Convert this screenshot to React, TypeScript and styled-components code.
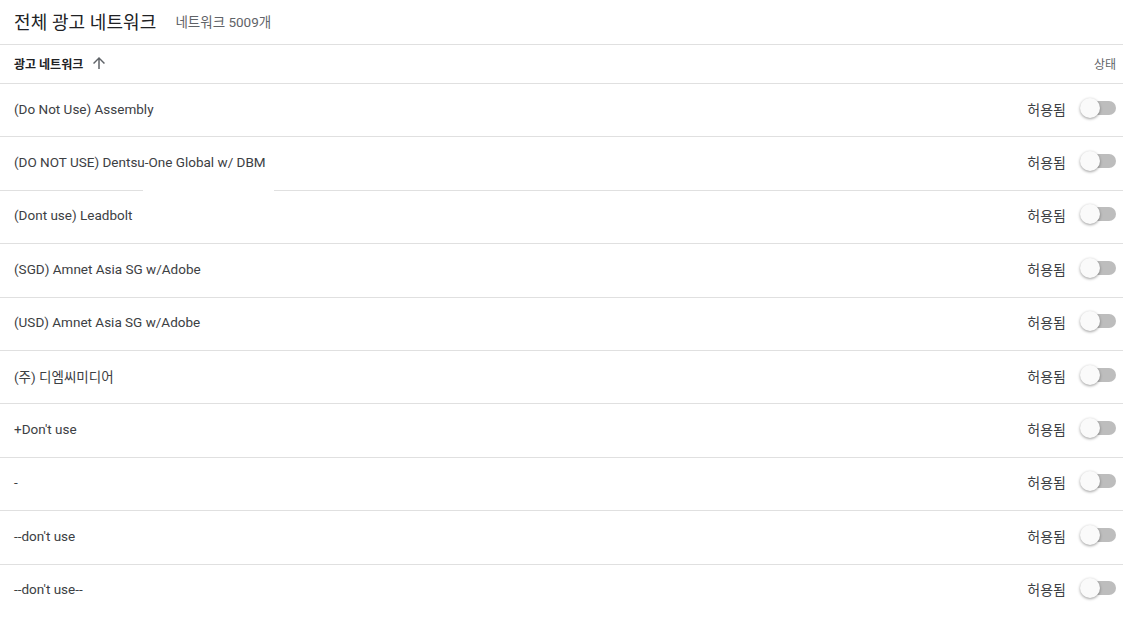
import React from "react";
import styled, { createGlobalStyle } from "styled-components";

const Global = createGlobalStyle`
  html, body { margin: 0; padding: 0; background: #fff; }
  body { font-family: Roboto, "Noto Sans CJK KR", "Noto Sans", sans-serif; color: #3c4043; }
  * { box-sizing: border-box; }
`;

const Page = styled.div`
  width: 1123px;
  position: relative;
`;

const TitleBar = styled.div`
  height: 45px;
  display: flex;
  align-items: center;
  padding: 0 0 2px 14px;
  gap: 19px;
  border-bottom: 1px solid #e0e0e0;
`;

const Title = styled.h1`
  margin: 0;
  font-size: 18px;
  font-weight: 400;
  color: #202124;
  letter-spacing: 0.1px;
`;

const Count = styled.span`
  font-size: 13.5px;
  color: #5f6368;
`;

const HeaderRow = styled.div`
  height: 39px;
  display: flex;
  align-items: center;
  justify-content: space-between;
  padding: 0 7px 0 14px;
  border-bottom: 1px solid #e0e0e0;
`;

const HeaderCell = styled.div<{ $bold?: boolean }>`
  display: flex;
  align-items: center;
  gap: 7px;
  font-size: 12px;
  font-weight: ${(p) => (p.$bold ? 700 : 400)};
  color: ${(p) => (p.$bold ? "#202124" : "#5f6368")};
  margin-top: -2px;
`;

const Row = styled.div`
  height: 53.4px;
  display: flex;
  align-items: center;
  justify-content: space-between;
  padding: 0 7px 3px 14px;
  border-bottom: 1px solid #e0e0e0;
  font-size: 13.5px;
`;

const Name = styled.span`
  color: #3c4043;
`;

const Status = styled.div`
  display: flex;
  align-items: center;
  gap: 14px;
  font-size: 14px;
  color: #3c4043;
`;

const Toggle = styled.div`
  position: relative;
  width: 36px;
  height: 20px;
  margin-top: -2px;
  display: flex;
  align-items: center;
`;

const Track = styled.div`
  width: 34px;
  height: 14px;
  margin-left: 2px;
  border-radius: 7px;
  background: #bdbdbd;
`;

const Thumb = styled.div`
  position: absolute;
  left: 0;
  top: 0;
  width: 20px;
  height: 20px;
  border-radius: 50%;
  background: #fafafa;
  box-shadow: 0 1px 3px rgba(0, 0, 0, 0.4);
`;

const Gap = styled.div`
  position: absolute;
  left: 143px;
  top: 187px;
  width: 131px;
  height: 5px;
  background: #fff;
`;

const rows = [
  "(Do Not Use) Assembly",
  "(DO NOT USE) Dentsu-One Global w/ DBM",
  "(Dont use) Leadbolt",
  "(SGD) Amnet Asia SG w/Adobe",
  "(USD) Amnet Asia SG w/Adobe",
  "(주) 디엠씨미디어",
  "+Don't use",
  "-",
  "--don't use",
  "--don't use--",
];

export default function App() {
  return (
    <Page>
      <Global />
      <TitleBar>
        <Title>전체 광고 네트워크</Title>
        <Count>네트워크 5009개</Count>
      </TitleBar>
      <HeaderRow>
        <HeaderCell $bold>
          광고 네트워크
          <svg width="18" height="18" viewBox="0 0 24 24" fill="#5f6368">
            <path d="M4 12l1.41 1.41L11 7.83V20h2V7.83l5.58 5.59L20 12l-8-8-8 8z" />
          </svg>
        </HeaderCell>
        <HeaderCell>상태</HeaderCell>
      </HeaderRow>
      {rows.map((r) => (
        <Row key={r}>
          <Name>{r}</Name>
          <Status>
            허용됨
            <Toggle>
              <Track />
              <Thumb />
            </Toggle>
          </Status>
        </Row>
      ))}
      <Gap />
    </Page>
  );
}
